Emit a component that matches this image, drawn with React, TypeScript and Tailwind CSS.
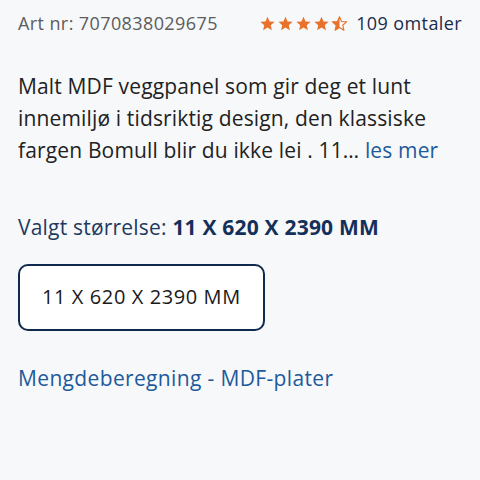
const Stars = () => (
    <div className="flex items-center gap-[1px] text-[#e8722c]">
        {[0, 1, 2, 3].map((i) => (
            <svg key={i} width="17" height="17" viewBox="0 0 24 24">
                <path fill="currentColor" d="M12 2.5l2.9 6.6 7.1.6-5.4 4.7 1.6 7-6.2-3.8-6.2 3.8 1.6-7L2 9.7l7.1-.6z" />
            </svg>
        ))}
        <svg width="17" height="17" viewBox="0 0 24 24">
            <path fill="none" stroke="currentColor" strokeWidth="1.6" strokeLinejoin="round" d="M12 2.5l2.9 6.6 7.1.6-5.4 4.7 1.6 7-6.2-3.8-6.2 3.8 1.6-7L2 9.7l7.1-.6z" />
            <path fill="currentColor" d="M12 2.5v15.1l-6.2 3.8 1.6-7L2 9.7l7.1-.6z" />
        </svg>
    </div>
);

export default function App() {
    return (
        <div className="w-[480px] h-[480px] bg-[#f7f8fa] px-[18px] pt-[9px] font-['Open_Sans',sans-serif]">

            {/* TOP ROW */}
            <div className="flex items-center justify-between h-[28px]">
                <span className="text-[18px] tracking-[0.4px] text-[#5c5c5c]">Art nr: 7070838029675</span>
                <div className="flex items-center gap-[8px]">
                    <Stars />
                    <span className="text-[18px] tracking-[0.4px] text-[#1b2a4a]">109 omtaler</span>
                </div>
            </div>

            {/* DESCRIPTION */}
            <p className="mt-[33px] text-[21px] leading-[32px] tracking-[0.15px] text-[#222]">
                Malt MDF veggpanel som gir deg et lunt innemiljø i tidsriktig design, den klassiske fargen Bomull blir du ikke lei . 11… <span className="text-[#1d5a9a]">les mer</span>
            </p>

            {/* SIZE */}
            <p className="mt-[46px] text-[21px] tracking-[0.2px] text-[#1f3a5f]">
                Valgt størrelse: <span className="font-bold text-[#14305a]">11 X 620 X 2390 MM</span>
            </p>
            <button className="mt-[20px] h-[67px] px-[22px] rounded-[10px] border-2 border-[#0f2a4f] bg-white text-[20px] tracking-[0.6px] text-[#1a1a1a]">
                11 X 620 X 2390 MM
            </button>

            <p className="mt-[32px] text-[21px] tracking-[0.35px] text-[#1d5a9a]">Mengdeberegning - MDF-plater</p>
        </div>
    );
}
